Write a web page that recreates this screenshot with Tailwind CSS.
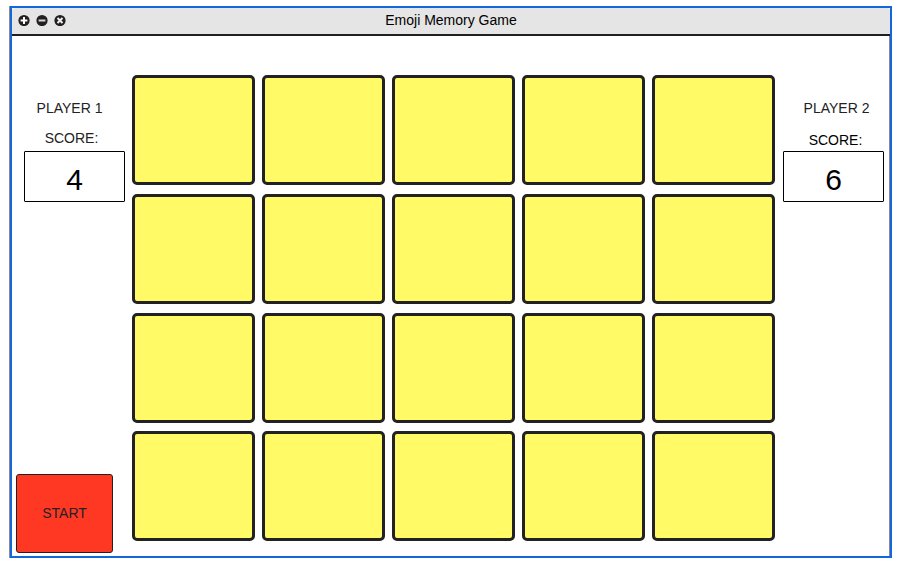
<!DOCTYPE html>
<html lang="en">
<head>
<meta charset="utf-8">
<title>Emoji Memory Game</title>
<script src="https://cdn.jsdelivr.net/npm/@tailwindcss/browser@4"></script>
</head>
<body class="h-[570px] overflow-hidden bg-white pt-[6px] pl-[9px] font-['Liberation_Sans',Arial,sans-serif] text-sm leading-4 text-[#222]">
<div class="w-[883px] border-l border-[#8b8b8b]">
<div class="flex h-[552px] w-[882px] flex-col border-2 border-[#1267dc]">
  <header class="flex h-7 shrink-0 items-center rounded-t-[3px] border-b-2 border-[#231f20] bg-[#e5e5e5]">
    <div class="flex w-[120px] gap-[6px] pl-[6px] pb-[2px]">
      <svg class="size-3" viewBox="0 0 12 12"><circle cx="6" cy="6.5" r="5.6" fill="#231f20"/><path d="M6 3.1v6.8M2.6 6.5h6.8" stroke="#fff" stroke-width="2"/></svg>
      <svg class="size-3" viewBox="0 0 12 12"><circle cx="6" cy="6.5" r="5.6" fill="#231f20"/><path d="M2.6 6.5h6.8" stroke="#d8d8d8" stroke-width="2"/></svg>
      <svg class="size-3" viewBox="0 0 12 12"><circle cx="6" cy="6.5" r="5.6" fill="#231f20"/><path d="M3.5 4l5 5M8.5 4l-5 5" stroke="#f0f0f0" stroke-width="2"/></svg>
    </div>
    <h1 class="w-[638px] pb-[2px] text-center text-black">Emoji Memory Game</h1>
  </header>
  <main class="flex grow">
    <aside class="flex w-[120px] flex-col pt-[64px] pl-1">
      <div class="ml-2 flex w-[101px] flex-col">
        <p class="mr-[10px] text-center">PLAYER 1</p>
        <p class="mt-[14px] mr-[6px] text-center">SCORE:</p>
        <div class="mt-[5px] flex h-[51px] items-center justify-center rounded-[1px] border border-black pt-[6px] text-[30px] text-black">4</div>
      </div>
      <button class="mt-auto mb-[3px] h-[79px] w-[97px] rounded-[3px] border border-[#231f20] bg-[#ff3824] pb-[2px]">START</button>
    </aside>
    <section class="grid h-[466px] grid-cols-[repeat(5,123px)] grid-rows-[119px_119px_118px_110px] gap-x-[7px] mt-[39px]">
      <div class="h-[110px] rounded-[5px] border-3 border-[#222] bg-[#fffa66]"></div>
      <div class="h-[110px] rounded-[5px] border-3 border-[#222] bg-[#fffa66]"></div>
      <div class="h-[110px] rounded-[5px] border-3 border-[#222] bg-[#fffa66]"></div>
      <div class="h-[110px] rounded-[5px] border-3 border-[#222] bg-[#fffa66]"></div>
      <div class="h-[110px] rounded-[5px] border-3 border-[#222] bg-[#fffa66]"></div>
      <div class="h-[110px] rounded-[5px] border-3 border-[#222] bg-[#fffa66]"></div>
      <div class="h-[110px] rounded-[5px] border-3 border-[#222] bg-[#fffa66]"></div>
      <div class="h-[110px] rounded-[5px] border-3 border-[#222] bg-[#fffa66]"></div>
      <div class="h-[110px] rounded-[5px] border-3 border-[#222] bg-[#fffa66]"></div>
      <div class="h-[110px] rounded-[5px] border-3 border-[#222] bg-[#fffa66]"></div>
      <div class="h-[110px] rounded-[5px] border-3 border-[#222] bg-[#fffa66]"></div>
      <div class="h-[110px] rounded-[5px] border-3 border-[#222] bg-[#fffa66]"></div>
      <div class="h-[110px] rounded-[5px] border-3 border-[#222] bg-[#fffa66]"></div>
      <div class="h-[110px] rounded-[5px] border-3 border-[#222] bg-[#fffa66]"></div>
      <div class="h-[110px] rounded-[5px] border-3 border-[#222] bg-[#fffa66]"></div>
      <div class="h-[110px] rounded-[5px] border-3 border-[#222] bg-[#fffa66]"></div>
      <div class="h-[110px] rounded-[5px] border-3 border-[#222] bg-[#fffa66]"></div>
      <div class="h-[110px] rounded-[5px] border-3 border-[#222] bg-[#fffa66]"></div>
      <div class="h-[110px] rounded-[5px] border-3 border-[#222] bg-[#fffa66]"></div>
      <div class="h-[110px] rounded-[5px] border-3 border-[#222] bg-[#fffa66]"></div>
    </section>
    <aside class="flex grow flex-col border-r border-[#8b8b8b] pt-[64px] pl-2">
      <div class="flex w-[101px] flex-col">
        <p class="ml-[6px] text-center">PLAYER 2</p>
        <p class="mt-[16px] ml-[4px] text-center text-black">SCORE:</p>
        <div class="mt-[3px] flex h-[51px] items-center justify-center rounded-[1px] border border-black pt-[6px] text-[30px] text-black">6</div>
      </div>
    </aside>
  </main>
</div>
</div>
</body>
</html>
